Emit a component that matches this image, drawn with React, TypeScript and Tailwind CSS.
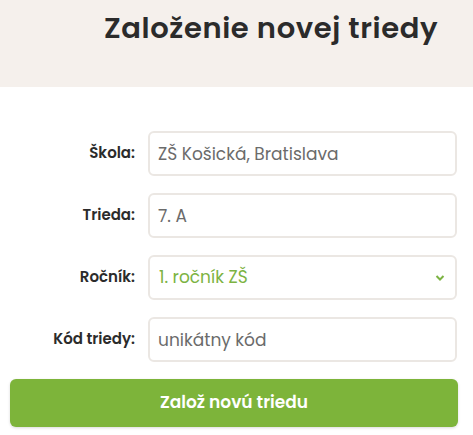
const font = "font-['Poppins','Inter','Liberation_Sans',sans-serif]";

const rows = [
  { label: "Škola:", value: "ZŠ Košická, Bratislava" },
  { label: "Trieda:", value: "7. A" },
];

function Row({ label, children }: { label: string; children: React.ReactNode }) {
  return (
    <div className="flex items-center">
      <label className="w-[135px] shrink-0 text-right text-[15px] font-semibold text-[#2b2b2b]">
        {label}
      </label>
      <div className="ml-[13px] w-[309px]">{children}</div>
    </div>
  );
}

export default function App() {
  return (
    <div className={`w-[473px] h-[435px] bg-white ${font}`}>
      {/* Header */}
      <div className="h-[87px] bg-[#f5f0ec] pl-[104px] pt-[8px]">
        <h1 className="text-[29px] leading-[40px] font-semibold tracking-[0.6px] text-[#2b2b2b]">
          Založenie novej triedy
        </h1>
      </div>

      {/* Form */}
      <div className="pt-[44px] flex flex-col gap-[17px]">
        {rows.map((r) => (
          <Row key={r.label} label={r.label}>
            <input
              defaultValue={r.value}
              className="w-full h-[45px] rounded-[6px] border-2 border-[#ebe7e3] px-[8px] text-[17px] text-[#6b6b6b] outline-none"
            />
          </Row>
        ))}
        <Row label="Ročník:">
          <div className="relative w-full h-[45px] rounded-[6px] border-2 border-[#ebe7e3] px-[9px] flex items-center text-[17px] text-[#7cb342]">
            1. ročník ZŠ
            <svg
              className="absolute right-[10px] top-[17px]"
              width="10"
              height="8"
              viewBox="0 0 10 8"
              fill="none"
              stroke="#7cb342"
              strokeWidth="2"
            >
              <path d="M1.5 2 L5 5.5 L8.5 2" />
            </svg>
          </div>
        </Row>
        <Row label="Kód triedy:">
          <input
            placeholder="unikátny kód"
            className="w-full h-[45px] rounded-[6px] border-2 border-[#ebe7e3] px-[8px] text-[17px] text-[#6b6b6b] placeholder:text-[#6b6b6b] outline-none"
          />
        </Row>
        <div className="pl-[10px] pr-[15px]">
          <button className="w-full h-[48px] rounded-[6px] bg-[#7db43a] text-white text-[17px] font-semibold shadow-[0_1px_3px_rgba(0,0,0,0.15)]">
            Založ novú triedu
          </button>
        </div>
      </div>
    </div>
  );
}
